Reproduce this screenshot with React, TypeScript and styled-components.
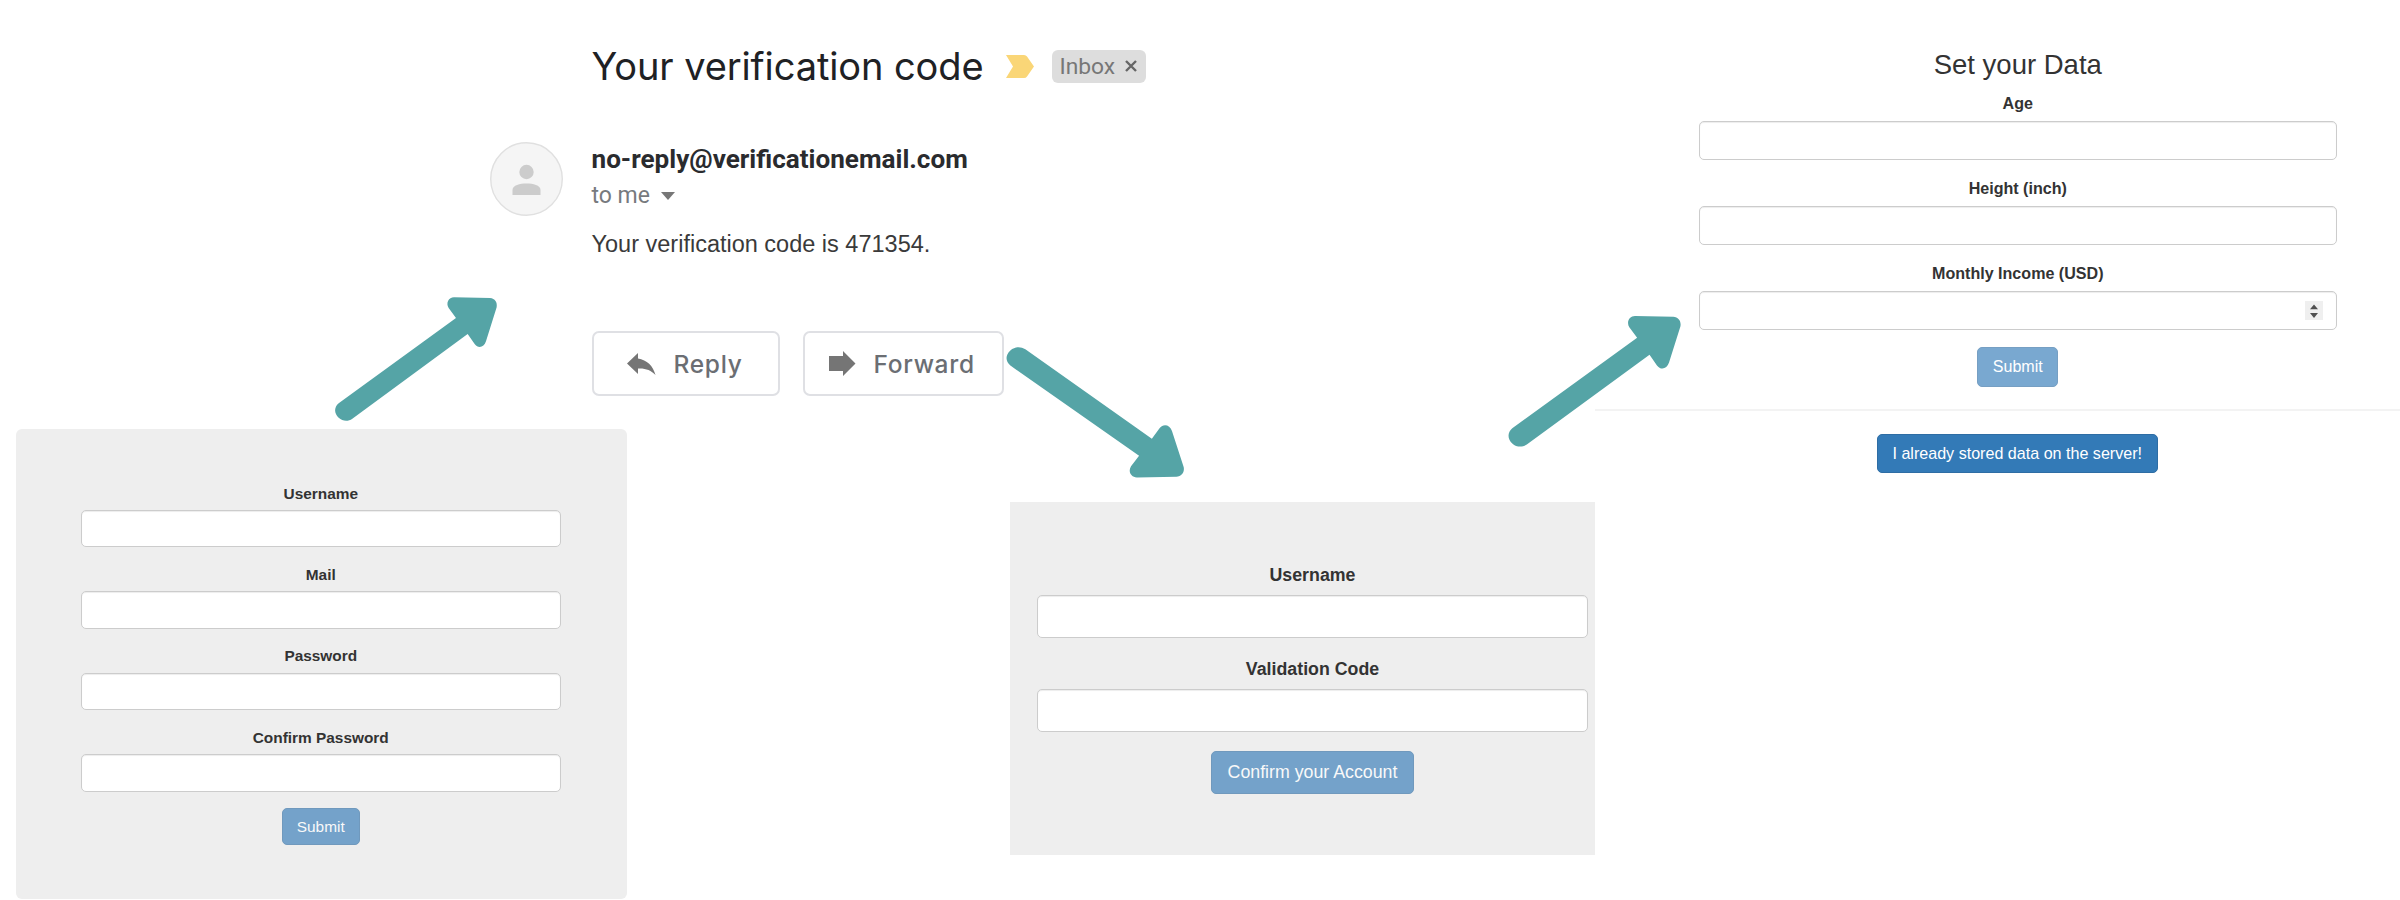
import React from "react";
import styled, { createGlobalStyle } from "styled-components";

const GlobalStyle = createGlobalStyle`
  *, *::before, *::after { box-sizing: border-box; }
  body { margin: 0; background: #fff; color: #333; font-family: "Liberation Sans", Arial, sans-serif; }
`;

const Board = styled.main`
  position: relative;
  width: 2400px;
  height: 900px;
  overflow: hidden;
  display: grid;
  grid-template-columns: 15.5px 475px 136px 383px 585px 805.5px;
  grid-template-rows: 429px 73px 398px;
`;

const Mail = styled.section`
  grid-column: 2 / 6;
  grid-row: 1;
  padding: 43px 0 0 474px;
  display: flex;
  flex-direction: column;
  align-items: flex-start;
`;

const Subject = styled.header`
  display: flex;
  align-items: center;
  height: 46px;
  margin-left: 102px;
`;

const SubjectTitle = styled.h1`
  margin: 0;
  width: 414px;
  font: 400 38px/46px Inter, sans-serif;
  letter-spacing: -0.1px;
  color: #202124;
  white-space: nowrap;
`;

const Tag = styled.span`
  display: flex;
  align-items: center;
  gap: 10px;
  width: 94px;
  height: 33px;
  margin-left: 18px;
  padding: 0 8px;
  border-radius: 6px;
  background: #ddd;
  color: #777;
  font: 400 22.8px/33px Roboto, sans-serif;
`;

const Message = styled.div`
  display: flex;
  gap: 29px;
  margin-top: 53px;
`;

const Avatar = styled.svg`
  width: 73px;
  height: 74px;
`;

const MessageText = styled.div`
  display: flex;
  flex-direction: column;
  white-space: nowrap;
`;

const Sender = styled.strong`
  font: 700 26.1px/34px Roboto, sans-serif;
  color: #2a2b2e;
`;

const Recipient = styled.span`
  display: flex;
  align-items: center;
  gap: 11px;
  font: 400 23px/40px Roboto, sans-serif;
  color: #777a7e;
`;

const MessageBody = styled.p`
  margin: 11px 0 0;
  font-size: 23.5px;
  line-height: 34px;
  color: #3a3a3a;
`;

const Actions = styled.div`
  display: flex;
  gap: 23px;
  margin: 70px 0 0 102px;
`;

const ActionButton = styled.button<{ $width: number; $inset: number }>`
  display: flex;
  align-items: center;
  gap: 18px;
  width: ${(p) => p.$width}px;
  height: 65px;
  padding: 0 0 0 ${(p) => p.$inset}px;
  border: 2px solid #dfe0e4;
  border-radius: 7px;
  background: #fff;
  color: #6b6e73;
  font: 500 24.5px/30px Inter, sans-serif;
  letter-spacing: 0.7px;
`;

const Form = styled.form<{ $scale: number; $pad: string; $fill?: string; $radius?: number }>`
  display: flex;
  flex-direction: column;
  align-items: center;
  padding: ${(p) => p.$pad};
  background: ${(p) => p.$fill ?? "transparent"};
  border-radius: ${(p) => p.$radius ?? 0}px;
  font-size: ${(p) => 14 * p.$scale}px;
`;

const SignUpForm = styled(Form)`
  grid-column: 2 / 4;
  grid-row: 2 / 4;
  height: 469.5px;
`;

const ConfirmForm = styled(Form)`
  grid-column: 5;
  grid-row: 3;
  height: 352.5px;
`;

const DataColumn = styled.section`
  grid-column: 6;
  grid-row: 1 / 4;
  display: flex;
  flex-direction: column;
  align-items: center;
`;

const DataForm = styled(Form)`
  width: 100%;
  height: 409px;
`;

const FormTitle = styled.h2`
  margin: 0 0 11.4px;
  font-size: 27.5px;
  line-height: 32px;
  font-weight: 400;
`;

const Field = styled.label`
  display: flex;
  flex-direction: column;
  width: 100%;
  margin-bottom: ${15 / 14}em;
  text-align: center;
  font-weight: 700;
  line-height: ${20 / 14};
`;

const InputBox = styled.span`
  display: flex;
  align-items: center;
  justify-content: flex-end;
  height: ${34 / 14}em;
  margin-top: ${5 / 14}em;
  padding-right: 13px;
  border: 1.4px solid #ccc;
  border-radius: 5px;
  background: #fff;
  box-shadow: inset 0 1px 1px rgba(0, 0, 0, 0.075);
`;

const Spinner = styled.svg`
  width: 18px;
  height: 19px;
`;

const PrimaryButton = styled.button<{ $width: number; $muted?: boolean }>`
  width: ${(p) => p.$width}px;
  height: ${34 / 14}em;
  flex: none;
  padding: 0;
  border: 1px solid #2e6da4;
  border-radius: 5px;
  background: #337ab7;
  color: #fff;
  font-family: inherit;
  font-size: inherit;
  white-space: nowrap;
  opacity: ${(p) => (p.$muted ? 0.65 : 1)};
`;

const Rule = styled.hr`
  width: 100%;
  height: 2px;
  margin: 0 0 23px;
  border: 0;
  background: #f3f3f3;
`;

const StoredAction = styled.div`
  padding-left: 40px;
  font-size: 16.1px;
`;

const FlowLayer = styled.svg`
  position: absolute;
  inset: 0;
  width: 2400px;
  height: 900px;
  pointer-events: none;
`;

const ARROW =
  "M56 370 L408 114 L386 84 C377 69 386 52 402 52 L510 54 C525 55 533 67 530 82 L498 184 C492 203 474 206 464 192 L443 162 L97 416 C84 425 68 424 56 413 C42 400 42 382 56 370Z";

const arrows = [
  "translate(320 280) scale(.3333)",
  "translate(989.9 495.8) scale(.3656 -.352)",
  "translate(1492.4 297.6) scale(.3547 .353)",
];

function TextField({ label, stepper }: { label: string; stepper?: boolean }) {
  return (
    <Field>
      {label}
      <InputBox>
        {stepper && (
          <Spinner viewBox="0 0 18 19">
            <rect width="18" height="19" fill="#efefef" />
            <path d="M5 8.200 9 3.500 13 8.200ZM5 12 9 17 13 12Z" fill="#505050" />
          </Spinner>
        )}
      </InputBox>
    </Field>
  );
}

export default function App() {
  return (
    <>
      <GlobalStyle />
      <Board>
        <Mail>
          <Subject>
            <SubjectTitle>Your verification code</SubjectTitle>
            <svg width="28" height="23" viewBox="0 0 28 23">
              <path d="M0 0H18Q20 0 21 1.5L28 11.5 21 21.5Q20 23 18 23H0L7 11.5Z" fill="#fad677" />
            </svg>
            <Tag>
              Inbox
              <svg width="12" height="12" viewBox="0 0 12 12" stroke="#666" strokeWidth="2.4">
                <path d="M1 1 11 11M11 1 1 11" />
              </svg>
            </Tag>
          </Subject>
          <Message>
            <Avatar viewBox="0 0 73 74">
              <ellipse cx="36.5" cy="37" rx="35.8" ry="36.2" fill="#f5f5f5" stroke="#e0e0e0" strokeWidth="1.4" />
              <circle cx="36.5" cy="30" r="7.2" fill="#ccc" />
              <path d="M22.5 53V48C22.5 43 30 41.5 36.5 41.5S50.5 43 50.5 48V53Z" fill="#ccc" />
            </Avatar>
            <MessageText>
              <Sender>no-reply@verificationemail.com</Sender>
              <Recipient>
                to me
                <svg width="14" height="8" viewBox="0 0 14 8">
                  <path d="M0 0H14L7 8Z" fill="#777" />
                </svg>
              </Recipient>
              <MessageBody>Your verification code is 471354.</MessageBody>
            </MessageText>
          </Message>
          <Actions>
            <ActionButton $width={188} $inset={33}>
              <svg width="29" height="24" viewBox="0 0 29 24">
                <path d="M11 6.5V1L0 11.5 11 22V16.5C18 16 24 18 28.5 23 26 13.500 20 8 11 6.500Z" fill="#757575" />
              </svg>
              Reply
            </ActionButton>
            <ActionButton $width={201} $inset={24}>
              <svg width="27" height="25" viewBox="0 0 27 25">
                <path d="M0 5H14V0L26.500 12.500 14 25V20H0Z" fill="#757575" />
              </svg>
              Forward
            </ActionButton>
          </Actions>
        </Mail>

        <SignUpForm $scale={1.1} $pad="53.5px 66px 0 65.5px" $fill="#eee" $radius={6}>
          <TextField label="Username" />
          <TextField label="Mail" />
          <TextField label="Password" />
          <TextField label="Confirm Password" />
          <PrimaryButton type="button" $width={77.5} $muted>Submit</PrimaryButton>
        </SignUpForm>

        <ConfirmForm $scale={1.27} $pad="61.2px 6.500px 0 27.500px" $fill="#eee">
          <TextField label="Username" />
          <TextField label="Validation Code" />
          <PrimaryButton type="button" $width={203} $muted>Confirm your Account</PrimaryButton>
        </ConfirmForm>

        <DataColumn>
          <DataForm $scale={1.149} $pad="49px 63px 0 104px">
            <FormTitle>Set your Data</FormTitle>
            <TextField label="Age" />
            <TextField label="Height (inch)" />
            <TextField label="Monthly Income (USD)" stepper />
            <PrimaryButton type="button" $width={81} $muted>Submit</PrimaryButton>
          </DataForm>
          <Rule />
          <StoredAction>
            <PrimaryButton type="button" $width={281}>I already stored data on the server!</PrimaryButton>
          </StoredAction>
        </DataColumn>

        <FlowLayer viewBox="0 0 2400 900" fill="#55a4a6">
          {arrows.map((placement) => (
            <path key={placement} d={ARROW} transform={placement} />
          ))}
        </FlowLayer>
      </Board>
    </>
  );
}
